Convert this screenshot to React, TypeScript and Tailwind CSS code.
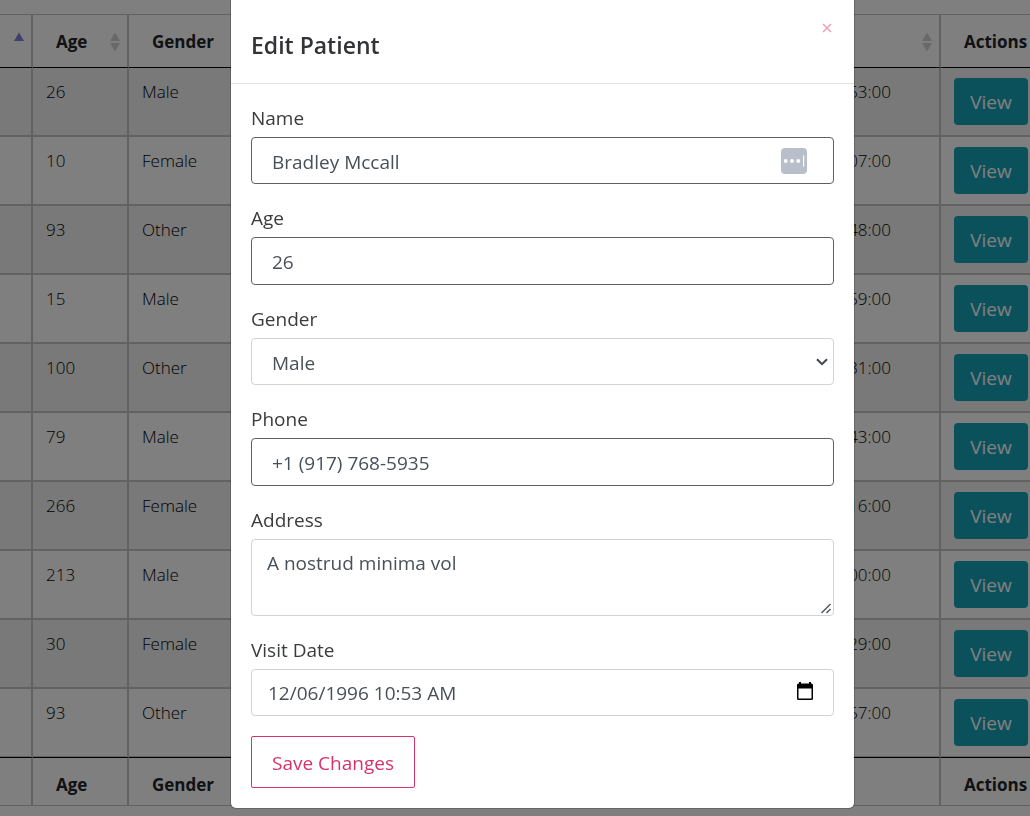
import type { ReactNode } from "react";

type Visit = { age: number; gender: string; time: string };

const visits: Visit[] = [
  { age: 26, gender: "Male", time: "53:00" },
  { age: 10, gender: "Female", time: "07:00" },
  { age: 93, gender: "Other", time: "48:00" },
  { age: 15, gender: "Male", time: "59:00" },
  { age: 100, gender: "Other", time: "31:00" },
  { age: 79, gender: "Male", time: "43:00" },
  { age: 266, gender: "Female", time: "16:00" },
  { age: 213, gender: "Male", time: "00:00" },
  { age: 30, gender: "Female", time: "29:00" },
  { age: 93, gender: "Other", time: "57:00" },
];

function SortArrows() {
  return (
    <svg viewBox="0 0 10 20" className="h-5 w-2.5 shrink-0 fill-[#d2d2d2]" aria-hidden="true">
      <path d="M5 0.5 10 9H0zM5 19.5 0 11h10z" />
    </svg>
  );
}

function SortedArrow() {
  return (
    <svg viewBox="0 0 10 20" className="h-5 w-2.5 shrink-0 fill-[#8080e0]" aria-hidden="true">
      <path d="M5 0.5 10 9H0z" />
    </svg>
  );
}

const headCell = "h-[54px] border-y border-r-2 border-t-[#c4c4c4] border-r-[#c4c4c4] border-b-black p-0 text-left last:border-r-0";
const bodyCell = "h-[69px] border-b-2 border-r-2 border-[#c4c4c4] px-[13px] pt-2.5 align-top last:border-r-0 group-last:h-[68px] group-last:border-b";
const textCell = `${bodyCell} font-light text-black`;
const footCell = "h-[49px] border-y border-r-2 border-t-black border-r-[#c4c4c4] border-b-[#c4c4c4] pt-1.5 pb-0 pl-[23px] text-left last:border-r-0";

function PatientTable() {
  return (
    <table className="w-full table-fixed border-separate border-spacing-0 text-[17px] leading-7">
      <colgroup>
        <col className="w-[33px]" />
        <col className="w-24" />
        <col className="w-[120px]" />
        <col />
        <col className="w-[89px]" />
      </colgroup>
      <thead>
        <tr>
          <th className={headCell}>
            <div className="flex justify-end pt-0.5 pr-[7px]"><SortedArrow /></div>
          </th>
          <th className={headCell}>
            <div className="flex items-center justify-between pt-0.5 pr-[7px] pl-[23px]">Age<SortArrows /></div>
          </th>
          <th className={headCell}><div className="pt-0.5 pl-[23px]">Gender</div></th>
          <th className={headCell}>
            <div className="flex justify-end pt-0.5 pr-[7px]"><SortArrows /></div>
          </th>
          <th className={headCell}><div className="pt-0.5 pl-[23px]">Actions</div></th>
        </tr>
      </thead>
      <tbody>
        {visits.map((v, i) => (
          <tr key={i} className="group odd:bg-[#f2f2f2]">
            <td className={bodyCell} />
            <td className={textCell}>{v.age}</td>
            <td className={textCell}>{v.gender}</td>
            <td className={textCell}><div className="pr-[35px] text-right">{v.time}</div></td>
            <td className={bodyCell}>
              <button type="button" className="h-[47px] w-[74px] rounded bg-[#17a2b8] text-[19px] text-white">View</button>
            </td>
          </tr>
        ))}
      </tbody>
      <tfoot>
        <tr>
          <th className={footCell} />
          <th className={footCell}>Age</th>
          <th className={footCell}>Gender</th>
          <th className={footCell} />
          <th className={footCell}>Actions</th>
        </tr>
      </tfoot>
    </table>
  );
}

function Field({ id, label, children }: { id: string; label: string; children: ReactNode }) {
  return (
    <div className="flex flex-col">
      <label htmlFor={id} className="mb-[5px] leading-7">{label}</label>
      {children}
    </div>
  );
}

const strong = "block w-full rounded border border-[#5f6063] bg-white px-5 pt-0.5 text-[#495057] outline-none";
const soft = "block w-full rounded border border-[#ced4da] bg-white text-[#495057] outline-none";

function EditPatient() {
  return (
    <section
      role="dialog"
      aria-labelledby="dialog-title"
      className="w-full max-w-[625px] self-start rounded-b-md border border-t-0 border-black/20 bg-white bg-clip-padding text-[19px] text-[#3a3b3d]"
    >
      <header className="flex h-[84px] items-start justify-between border-b border-[#dee2e6] px-5">
        <h2 id="dialog-title" className="pt-[27px] text-[23px] leading-9 font-semibold text-[#333436]">Edit Patient</h2>
        <button type="button" aria-label="Close" className="mt-[21px] p-0.5 text-[#f0a0b8]">
          <svg viewBox="0 0 10 10" className="size-2.5" fill="none" stroke="currentColor" strokeWidth="1.5">
            <path d="M1 1 9 9M9 1 1 9" />
          </svg>
        </button>
      </header>
      <form className="flex flex-col gap-5 p-5" onSubmit={(e) => e.preventDefault()}>
        <Field id="name" label="Name">
          <div className="relative">
            <input id="name" type="text" defaultValue="Bradley Mccall" className={`${strong} h-[47px]`} />
            <svg viewBox="0 0 26 26" className="absolute top-[11px] right-[27px] size-[26px]" aria-hidden="true">
              <rect width="26" height="26" rx="4" fill="#b9bfca" />
              <g fill="#fff">
                <circle cx="4.7" cy="13" r="1.9" />
                <circle cx="11" cy="13" r="1.9" />
                <circle cx="17.3" cy="13" r="1.9" />
                <rect x="22" y="7.5" width="1.2" height="11" />
              </g>
            </svg>
          </div>
        </Field>
        <Field id="age" label="Age">
          <input id="age" type="text" inputMode="numeric" defaultValue="26" className={`${strong} h-12`} />
        </Field>
        <Field id="gender" label="Gender">
          <div className="relative">
            <select id="gender" defaultValue="Male" className={`${soft} h-[47px] appearance-none px-5 pt-1`}>
              <option>Male</option>
              <option>Female</option>
              <option>Other</option>
            </select>
            <svg viewBox="0 0 12 8" className="pointer-events-none absolute top-5 right-1.5 h-2 w-3" fill="none" stroke="#41464b" strokeWidth="2" aria-hidden="true">
              <path d="M1 1.2 6 6.2 11 1.2" />
            </svg>
          </div>
        </Field>
        <Field id="phone" label="Phone">
          <input id="phone" type="tel" defaultValue="+1 (917) 768-5935" className={`${strong} h-12`} />
        </Field>
        <Field id="address" label="Address">
          <div className="relative">
            <textarea id="address" defaultValue="A nostrud minima vol" className={`${soft} h-[77px] resize-none px-[15px] py-[9px] leading-7`} />
            <svg viewBox="0 0 11 11" className="pointer-events-none absolute right-0.5 bottom-0.5 size-[11px]" fill="none" stroke="#55585c" strokeWidth="1.5" aria-hidden="true">
              <path d="M0.5 10 9.500 1M5.500 10 9.500 6" />
            </svg>
          </div>
        </Field>
        <Field id="visit" label="Visit Date">
          <div className="relative">
            <input id="visit" type="text" defaultValue="12/06/1996 10:53 AM" className={`${soft} h-[47px] px-4`} />
            <button type="button" aria-label="Open calendar" className="absolute top-[13px] right-[21px]">
              <svg viewBox="0 0 16 18" className="block h-[18px] w-4" aria-hidden="true">
                <path fillRule="evenodd" d="M2 0h2v1.5h8V0h2v1.5h.5A1.5 1.5 0 0 1 16 3v13.5a1.5 1.5 0 0 1-1.5 1.5h-13A1.5 1.5 0 0 1 0 16.5V3a1.5 1.5 0 0 1 1.5-1.5H2zM1.5 6.5v10h13v-10z" />
              </svg>
            </button>
          </div>
        </Field>
        <button type="submit" className="h-[52px] self-start rounded-xs border border-[#d6336c] px-5 pt-0.5 text-[#d6336c]">
          Save Changes
        </button>
      </form>
    </section>
  );
}

export default function App() {
  return (
    <div className="h-screen overflow-hidden bg-white pt-3.5 font-['Open_Sans','Noto_Sans',sans-serif] text-[#212529]">
      <PatientTable />
      <div className="fixed inset-0 flex justify-center bg-black/50 pl-[55px]">
        <EditPatient />
      </div>
    </div>
  );
}
